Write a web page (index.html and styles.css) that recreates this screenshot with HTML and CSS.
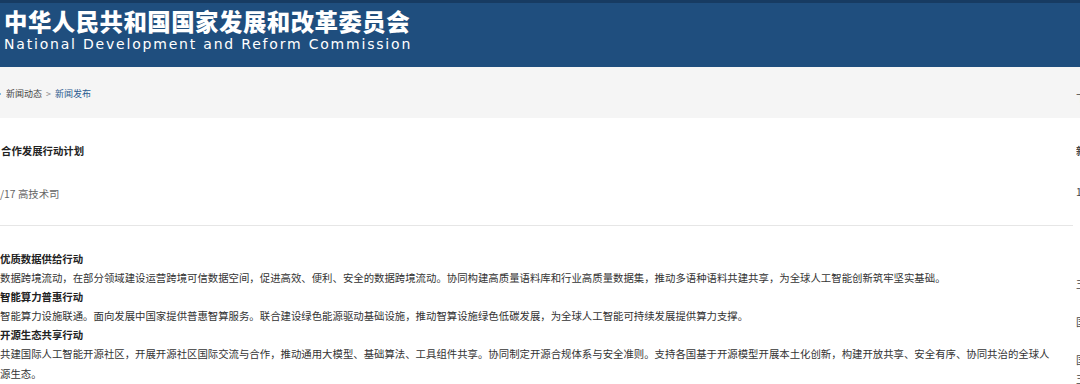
FILE: index.html
```html
<!DOCTYPE html>
<html lang="zh-CN">
<head>
  <meta charset="UTF-8">
  <title>合作发展行动计划 - 国家发展和改革委员会</title>
  <link rel="stylesheet" href="styles.css">
</head>
<body>
  <div class="header">
    <div class="site-cn">中华人民共和国国家发展和改革委员会</div>
    <div class="site-en">National Development and Reform Commission</div>
  </div>

  <div class="crumb-bar">
    <div class="crumb">
      <span class="dot">•</span>
      <a href="#">新闻动态</a>
      <span class="sep">&gt;</span>
      <a href="#" class="current">新闻发布</a>
    </div>
    <div class="side side-crumb">下</div>
  </div>

  <div class="page">
    <div class="main">
      <div class="art-title">合作发展行动计划</div>
      <div class="art-meta">/17 高技术司</div>
      <div class="art-body">
        <p class="sub">优质数据供给行动</p>
        <p>数据跨境流动，在部分领域建设运营跨境可信数据空间，促进高效、便利、安全的数据跨境流动。协同构建高质量语料库和行业高质量数据集，推动多语种语料共建共享，为全球人工智能创新筑牢坚实基础。</p>
        <p class="sub">智能算力普惠行动</p>
        <p>智能算力设施联通。面向发展中国家提供普惠智算服务。联合建设绿色能源驱动基础设施，推动智算设施绿色低碳发展，为全球人工智能可持续发展提供算力支撑。</p>
        <p class="sub">开源生态共享行动</p>
        <p>共建国际人工智能开源社区，开展开源社区国际交流与合作，推动通用大模型、基础算法、工具组件共享。协同制定开源合规体系与安全准则。支持各国基于开源模型开展本土化创新，构建开放共享、安全有序、协同共治的全球人<br>源生态。</p>
      </div>
    </div>
    <div class="side">
      <div class="side-title">新</div>
      <div class="side-meta">1</div>
      <div class="side-list">
        <p>王</p>
        <p>国</p>
        <p>国<br>王</p>
      </div>
    </div>
  </div>
</body>
</html>
```

FILE: styles.css
```css
html, body { margin: 0; padding: 0; overflow: hidden; }
body { width: 1080px; font-family: "Microsoft YaHei", "Noto Sans CJK SC", sans-serif; background: #fff; color: #333; }
a { text-decoration: none; color: inherit; }
p { margin: 0; }

.header { height: 64px; border-top: 3px solid #173b62; background: #1f4e7e; padding-left: 4px; color: #fff; box-sizing: content-box; }
.site-cn { font-family: "Noto Sans CJK SC", sans-serif; font-weight: 900; font-size: 23.4px; line-height: 26px; padding-top: 5px; letter-spacing: 0.5px; }
.site-en { font-family: "DejaVu Sans", sans-serif; font-size: 14px; line-height: 18px; letter-spacing: 1.8px; margin-top: 1px; }

.crumb-bar { height: 51px; background: #f5f5f5; display: flex; justify-content: space-between; align-items: center; }
.crumb { font-size: 9px; color: #444; margin-left: -5px; display: flex; gap: 2px; align-items: center; padding-top: 1px; }
.crumb .sep { color: #888; margin: 0 2px; }
.crumb .current { color: #2b5c90; }
.side-crumb { font-size: 9px; line-height: 11px; color: #888; padding-top: 10px; }

.page { display: flex; justify-content: space-between; }
.main { width: 1073px; }
.art-title { font-weight: bold; font-size: 10.4px; color: #222; padding-top: 26px; line-height: 14px; margin-left: 1px; }
.art-meta { font-size: 10.4px; color: #666; padding-top: 29px; line-height: 14px; padding-bottom: 24px; border-bottom: 1px solid #e6e6e6; }
.art-body { width: 1060px; font-size: 10.4px; line-height: 19.1px; color: #333; padding-top: 23px; }
.art-body .sub { font-weight: bold; color: #222; }

.side { width: 4px; overflow: hidden; font-size: 10.4px; color: #444; }
.side-title { font-weight: bold; padding-top: 26px; line-height: 14px; }
.side-meta { padding-top: 27px; line-height: 14px; }
.side-list { padding-top: 75px; line-height: 19px; }
.side-list p { margin-bottom: 19px; }
```
